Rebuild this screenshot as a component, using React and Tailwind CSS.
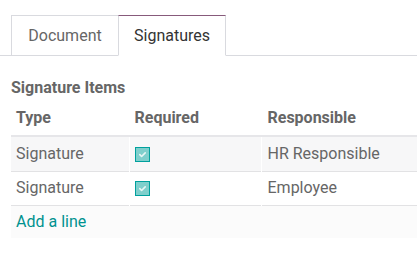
const Check = () => (
  <span className="inline-flex w-[15px] h-[15px] items-center justify-center border border-[#00a09d] bg-[#7fcfcc] align-middle">
    <svg className="w-[9px] h-[9px]" viewBox="0 0 10 10" fill="none">
      <path d="M2 5.2l2 2 4-4" stroke="#e8f6f5" strokeWidth={1.8} strokeLinecap="round" strokeLinejoin="round" />
    </svg>
  </span>
);

const rows = [
  { type: "Signature", responsible: "HR Responsible" },
  { type: "Signature", responsible: "Employee" },
];

export default function App() {
  return (
    <div className="w-[417px] h-[258px] bg-white overflow-hidden font-['Roboto',sans-serif]">
      {/* Tabs */}
      <div className="pt-[15px]">
        <div className="flex border-b border-[#d9dadf] h-[41px]">
          <div className="w-[11px]" />
          <div className="w-[108px] h-[41px] -mb-px border border-[#d9dadf] flex items-center justify-center text-[16px] text-[#666]">
            Document
          </div>
          <div className="w-[108px] h-[41px] -mb-px -ml-px border border-[#d9dadf] border-t-[#875a7b] border-b-white bg-white flex items-center justify-center text-[16px] text-[#333]">
            Signatures
          </div>
        </div>
      </div>

      {/* Signature items */}
      <div className="pl-[11px] mt-[22px]">
        <div className="text-[16px] leading-[20px] font-bold text-[#666]">Signature Items</div>
        <table className="mt-[2px] w-[430px] border-collapse text-[16px] text-[#666]">
          <thead>
            <tr className="border-b-2 border-[#e6e6e9]">
              <th className="w-[118px] text-left font-bold pl-[5px] pt-[6px] pb-[5px] leading-[24px] border-r border-white">Type</th>
              <th className="w-[132px] text-left font-bold pl-[5px] pt-[6px] pb-[5px] leading-[24px] border-r border-white">Required</th>
              <th className="text-left font-bold pl-[6px] pt-[6px] pb-[5px] leading-[24px]">Responsible</th>
            </tr>
          </thead>
          <tbody>
            {rows.map((r, i) => (
              <tr key={i} className={`${i === 0 ? "bg-[#f7f7f8]" : "bg-white"} border-b border-[#e2e2e4]`}>
                <td className={`pl-[5px] leading-[24px] border-r border-white ${i === 0 ? "h-[35px]" : "h-[34px]"}`}>{r.type}</td>
                <td className="pl-[5px] leading-[24px] border-r border-white">
                  <Check />
                </td>
                <td className="pl-[6px] leading-[24px]">{r.responsible}</td>
              </tr>
            ))}
            <tr className="bg-[#fbfbfb]">
              <td colSpan={3} className="h-[33px] pl-[5px] leading-[24px] text-[#00928f]">Add a line</td>
            </tr>
          </tbody>
        </table>
      </div>
    </div>
  );
}
